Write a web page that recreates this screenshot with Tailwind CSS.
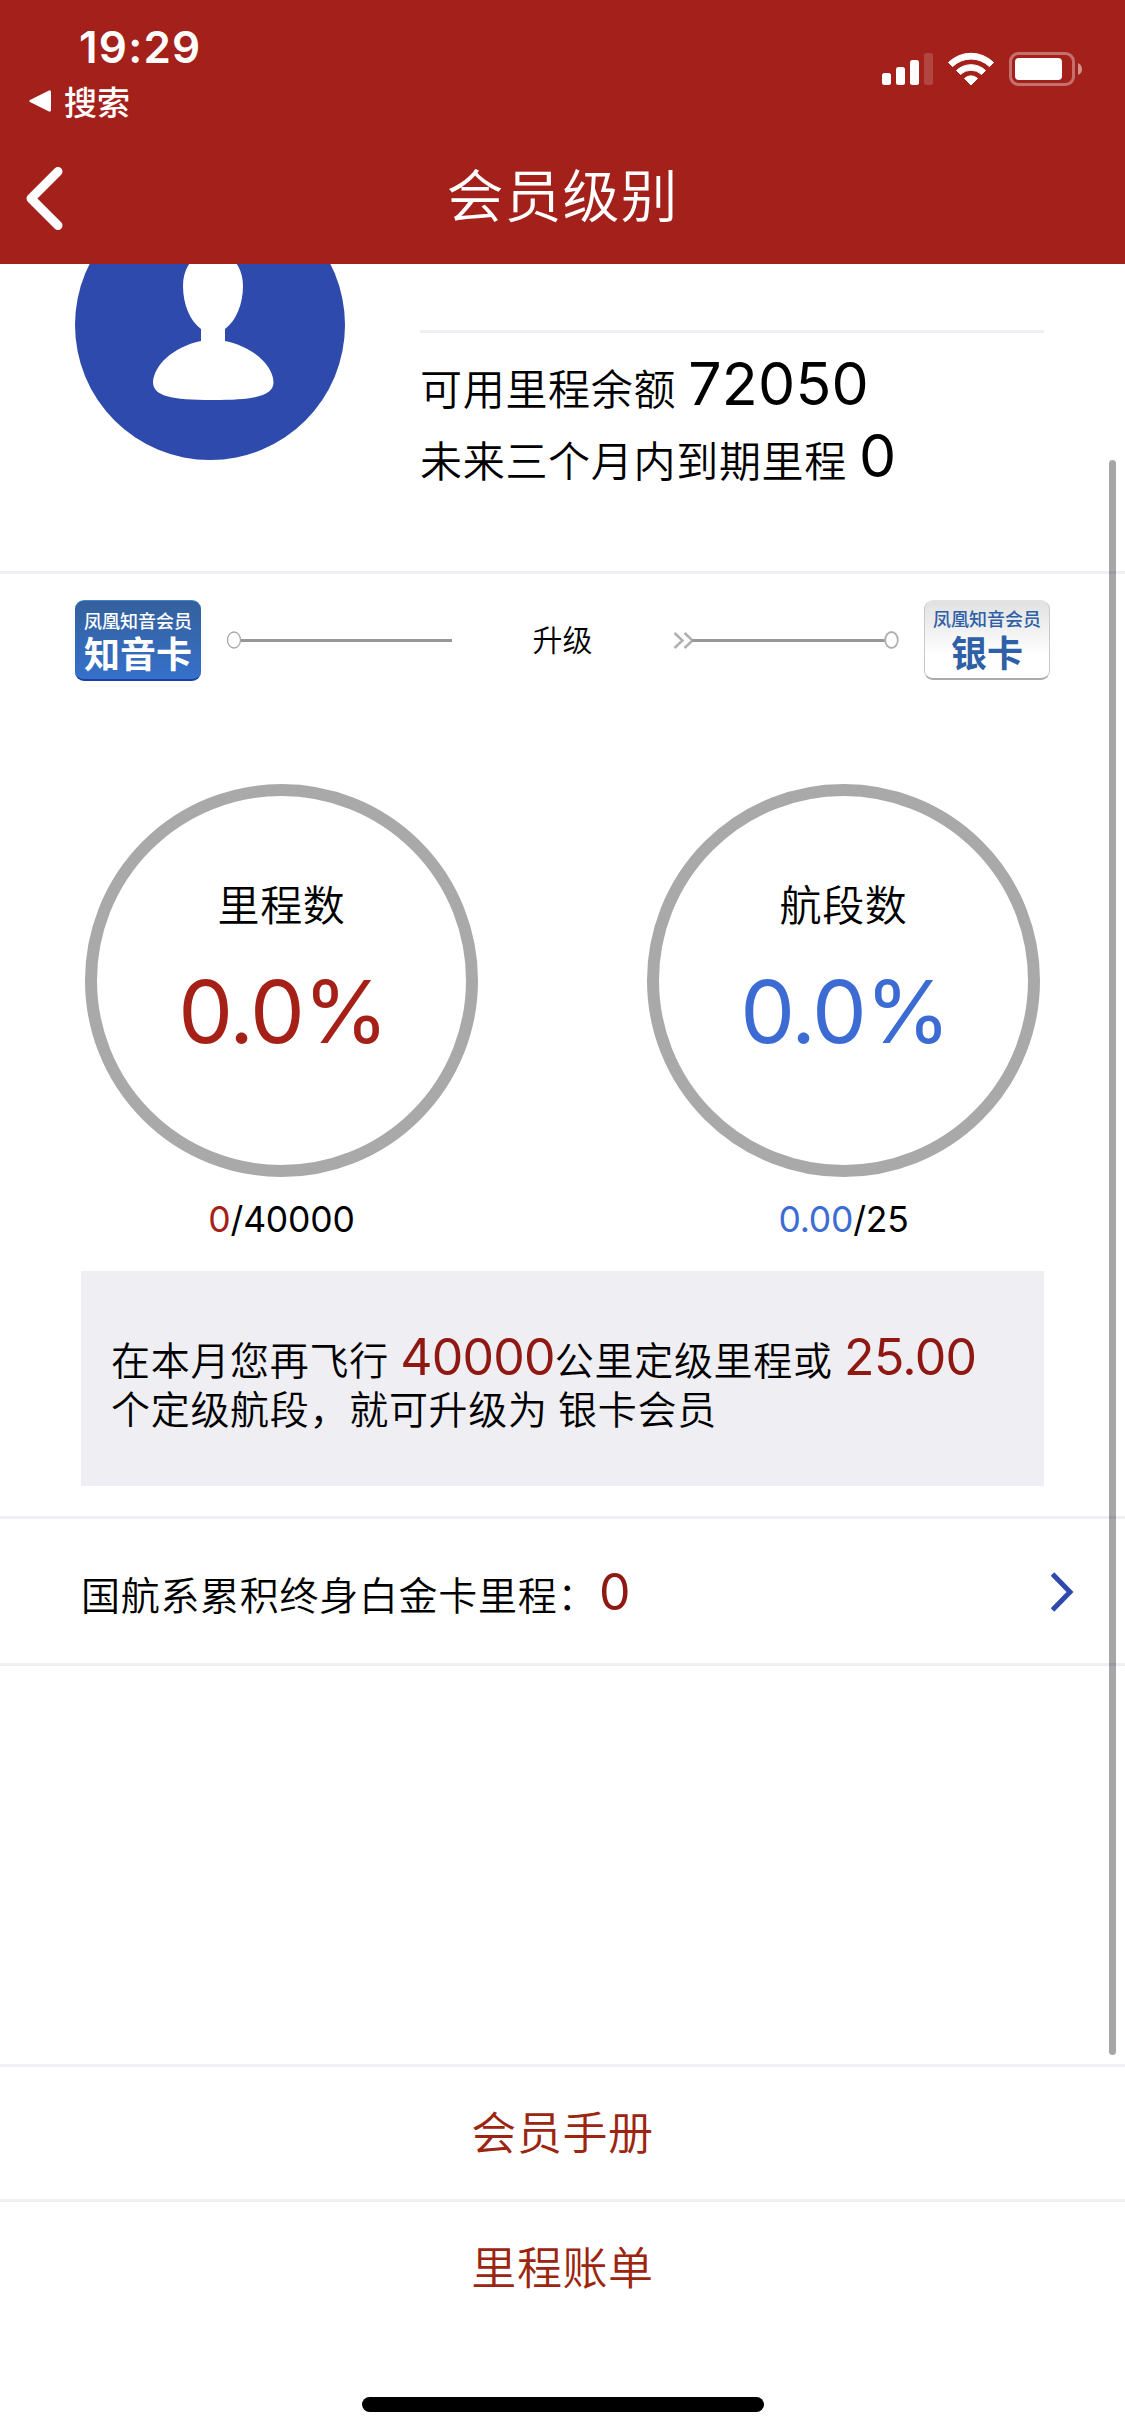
<!DOCTYPE html>
<html lang="zh-CN">
<head>
<meta charset="utf-8">
<title>会员级别</title>
<script src="https://cdn.jsdelivr.net/npm/@tailwindcss/browser@4"></script>
</head>
<body class="relative flex h-[2436px] w-[1125px] flex-col overflow-hidden bg-white font-['Noto_Sans_CJK_SC',sans-serif] font-[350] text-black">

<header class="z-10 h-[264px] shrink-0 bg-[#a4201b] text-white">
  <div class="flex h-[124px] justify-between">
    <div class="pt-[25px]">
      <div class="pl-[79px] font-['Inter',sans-serif] text-[44px] leading-[44px] font-semibold tracking-[1.2px]">19:29</div>
      <div class="mt-[9px] flex items-center gap-[13px] pl-[29px] text-[33px] leading-[46px] font-medium">
        <svg class="h-[22px] w-[22px]" viewBox="0 0 22 22"><path d="M1 10 20 .4Q22 0 22 2V20Q22 22 20 21.600L1 12Q-.5 11 1 10Z" fill="#fff"/></svg>
        <span>搜索</span>
      </div>
    </div>
    <div class="flex pt-[52px] pr-[43px]">
      <svg class="h-[34px] w-[200px]" viewBox="0 0 200 34" fill="#fff">
        <rect x="0" y="21" width="9" height="12" rx="2.500"/>
        <rect x="14" y="15" width="9" height="18" rx="2.500"/>
        <rect x="28" y="8" width="9" height="25" rx="2.500"/>
        <rect x="42" y="1" width="9" height="32" rx="2.500" opacity=".17"/>
        <path d="M66.500 10.500A32 32 0 0 1 111.500 10.500L107.500 14.600A26.500 26.500 0 0 0 70.500 14.600Z" stroke="#fff" stroke-width="1" stroke-linejoin="round"/>
        <path d="M74.500 18.500A21 21 0 0 1 103.500 18.500L99.500 22.400A15.200 15.200 0 0 0 78.500 22.400Z" stroke="#fff" stroke-width="1" stroke-linejoin="round"/>
        <path d="M82.500 26.400A9.500 9.500 0 0 1 95.500 26.400L89 33Z" stroke="#fff" stroke-width="1" stroke-linejoin="round"/>
        <rect x="128.500" y="1.500" width="63" height="31" rx="8" fill="none" stroke="#fff" stroke-width="3" opacity=".36"/>
        <rect x="133" y="6" width="47" height="22" rx="4"/>
        <path d="M196 11Q200 13 200 17.200T196 23Z" opacity=".5"/>
      </svg>
    </div>
  </div>
  <div class="grid h-[140px] grid-cols-[200px_1fr_200px]">
    <svg class="mt-[43px] ml-[26px] h-[64px] w-[37px]" viewBox="0 0 37 64"><path d="M32 4.500 5 31.500 32 58.500" fill="none" stroke="#fff" stroke-width="9" stroke-linecap="round" stroke-linejoin="round"/></svg>
    <h1 class="pt-[28px] text-center text-[57px] leading-[80px] font-[350] tracking-[1px]">会员级别</h1>
  </div>
</header>

<main class="flex flex-col">
  <section class="flex h-[310px] border-b-3 border-[#efeff4] pl-[75px]">
    <svg class="-mt-[74px] h-[270px] w-[270px]" viewBox="0 0 270 270">
      <circle cx="135" cy="135" r="135" fill="#2e4aac"/>
      <path d="M138 62C156 62 168 76 168 96C168 114 161 131 150 139V151C179 157 198 176 198.500 192C198.500 206 180 210 138 210S78 206 78 192C79 176 97 157 126 151V139C115 131 108 114 108 96C108 76 120 62 138 62Z" fill="#fff"/>
    </svg>
    <div class="ml-[75px] w-[624px] pt-[66px]">
      <div class="h-[3px] bg-[#efeff4]"></div>
      <div class="pt-[15px] text-[42px] leading-[72px] tracking-[0.7px]">
        <p class="flex h-[72px] items-baseline gap-[12px]">可用里程余额<span class="font-['Inter',sans-serif] text-[59px] font-normal tracking-[0.2px]">72050</span></p>
        <p class="flex h-[72px] items-baseline gap-[12px] whitespace-nowrap">未来三个月内到期里程<span class="font-['Inter',sans-serif] text-[59px] font-normal tracking-[0.2px]">0</span></p>
      </div>
    </div>
  </section>

  <section class="h-[945px] border-b-3 border-[#efeff4] pt-[26px]">
    <div class="flex h-[81px] pl-[75px]">
      <div class="flex h-[81px] w-[126px] flex-col items-center rounded-[9px] border-t border-b-2 border-t-[#3f86cc] border-b-[#1c3fa4] bg-linear-to-b from-[#34619d] to-[#3670cb] text-white">
        <span class="mt-[6px] text-[18px] leading-[26px] font-medium">凤凰知音会员</span>
        <span class="text-[36px] leading-[38px] font-bold">知音卡</span>
      </div>
      <svg class="mt-[31px] ml-[26px] h-[18px] w-[225px]" viewBox="0 0 225 18"><path d="M14 9.500H225" stroke="#979797" stroke-width="3"/><ellipse cx="7" cy="9" rx="6.500" ry="8" fill="#fff" stroke="#a8a8a8" stroke-width="1.300"/></svg>
      <span class="mt-[16px] w-[221px] text-center text-[30px] leading-[44px]">升级</span>
      <svg class="mt-[31px] h-[18px] w-[226px]" viewBox="0 0 226 18" fill="none"><path d="M1.500 2 9.500 9.500 1.500 17M11.500 2 19.500 9.500 11.500 17" stroke="#b0b0b0" stroke-width="2.500"/><path d="M19 9.500H212" stroke="#979797" stroke-width="3"/><ellipse cx="218.500" cy="9" rx="6.300" ry="8" fill="#fff" stroke="#b0b0b0" stroke-width="1.800"/></svg>
      <div class="ml-[25px] flex h-[80px] w-[126px] flex-col items-center rounded-[9px] border border-b-2 border-[#c9c9c9] border-t-[#e3e3e3] border-b-[#ababab] bg-linear-to-b from-[#e1e1e1] to-white to-70% text-[#2f5fa6]">
        <span class="mt-[4px] text-[18px] leading-[26px] font-medium">凤凰知音会员</span>
        <span class="mt-px text-[36px] leading-[38px] font-bold">银卡</span>
      </div>
    </div>

    <div class="mt-[103px] flex gap-[169px] pl-[85px]">
      <div class="flex w-[393px] flex-col items-center">
        <div class="flex h-[393px] w-[393px] flex-col items-center rounded-full border-12 border-[#a9a9a9] pt-[75px]">
          <span class="text-[42px] leading-[64px] tracking-[0.7px]">里程数</span>
          <span class="mt-[27px] ml-[2px] font-['Inter',sans-serif] text-[87px] leading-[100px] font-normal tracking-[-1.8px] text-[#a52117]">0.0%</span>
        </div>
        <div class="mt-[20px] font-['Inter',sans-serif] text-[35.500px] leading-[46px] font-normal tracking-[-0.2px]"><span class="text-[#a52117]">0</span>/40000</div>
      </div>
      <div class="flex w-[393px] flex-col items-center">
        <div class="flex h-[393px] w-[393px] flex-col items-center rounded-full border-12 border-[#a9a9a9] pt-[75px]">
          <span class="text-[42px] leading-[64px] tracking-[0.7px]">航段数</span>
          <span class="mt-[27px] ml-[2px] font-['Inter',sans-serif] text-[87px] leading-[100px] font-normal tracking-[-1.8px] text-[#3c6cd3]">0.0%</span>
        </div>
        <div class="mt-[20px] font-['Inter',sans-serif] text-[35.500px] leading-[46px] font-normal tracking-[-0.2px]"><span class="text-[#3c6cd3]">0.00</span>/25</div>
      </div>
    </div>

    <div class="mt-[28px] ml-[81px] h-[215px] w-[963px] bg-[#eeeef3] pt-[63px] pl-[30px] text-[39px] leading-[49px] tracking-[0.7px] whitespace-nowrap">
      在本月您再飞行 <span class="ml-[2px] font-['Inter',sans-serif] text-[50px] leading-[40px] font-normal tracking-[-0.8px] text-[#8f1812]">40000</span>公里定级里程或 <span class="ml-[2px] font-['Inter',sans-serif] text-[50px] leading-[40px] font-normal tracking-[-0.7px] text-[#8f1812]">25.00</span><br>个定级航段，就可升级为 <span class="ml-px">银卡会员</span>
    </div>
  </section>

  <section class="flex h-[147px] items-center justify-between border-b-3 border-[#efeff4] pr-[51px] pl-[81px]">
    <p class="pt-[4px] text-[39px] leading-[60px] tracking-[0.7px]">国航系累积终身白金卡里程：<span class="ml-[2px] font-['Inter',sans-serif] text-[50px] leading-[40px] font-normal text-[#8f1812]">0</span></p>
    <svg class="mt-[2px] h-[40px] w-[24px]" viewBox="0 0 24 40"><path d="M2.500 2 20 20 2.500 38" fill="none" stroke="#2e4aac" stroke-width="5"/></svg>
  </section>
</main>

<footer class="mt-auto flex h-[372px] flex-col items-center text-[45px] leading-[128px] tracking-[0.6px] text-[#9c2510]">
  <a class="h-[135px] w-full border-t-3 border-[#efeff4] text-center">会员手册</a>
  <a class="h-[135px] w-full border-t-3 border-[#efeff4] text-center">里程账单</a>
  <div class="mt-[63px] h-[15px] w-[402px] rounded-full bg-black"></div>
</footer>

<div class="absolute top-[460px] left-[1109px] h-[1595px] w-[7px] rounded-full bg-black/35"></div>
</body>
</html>
